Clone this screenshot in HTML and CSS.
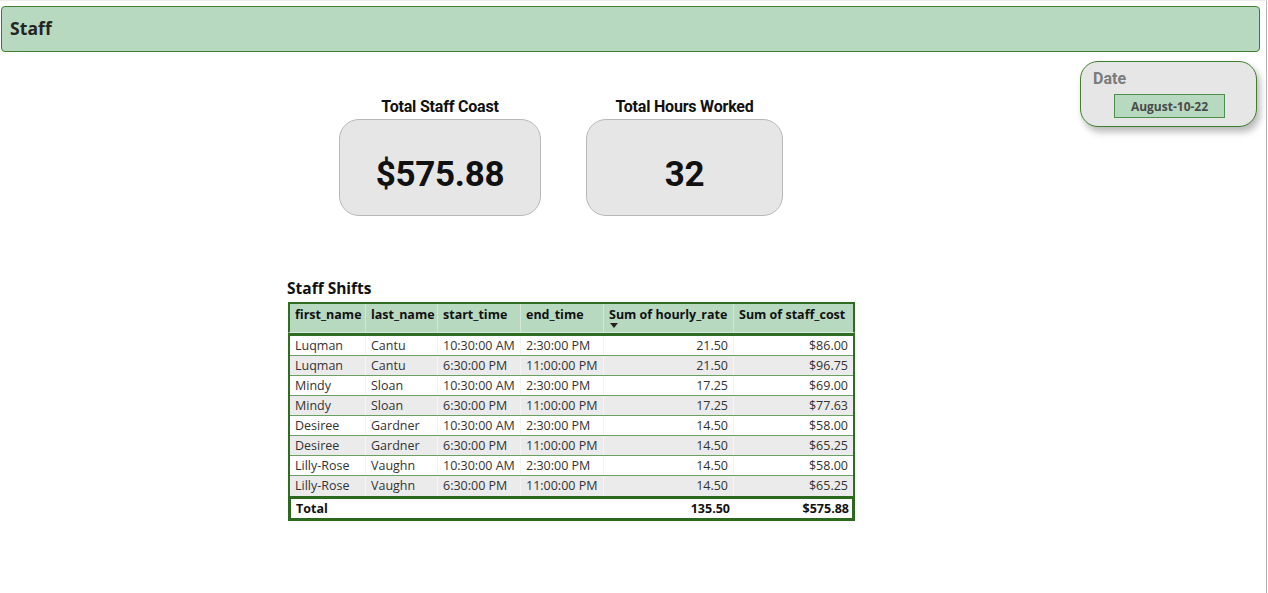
FILE: index.html
```html
<!DOCTYPE html>
<html>
<head>
<meta charset="utf-8">
<link rel="stylesheet" href="styles.css">
</head>
<body>
<div class="page">
  <div class="header"><span class="header-title">Staff</span></div>
  <div class="top-row">
    <div class="kpis">
      <div class="kpi kpi-cost">
        <div class="kpi-title">Total Staff Coast</div>
        <div class="kpi-card"><span class="kpi-value">$575.88</span></div>
      </div>
      <div class="kpi kpi-hours">
        <div class="kpi-title">Total Hours Worked</div>
        <div class="kpi-card"><span class="kpi-value">32</span></div>
      </div>
    </div>
    <div class="slicer">
      <div class="slicer-title">Date</div>
      <div class="slicer-value">August-10-22</div>
    </div>
  </div>
  <div class="table-section">
    <div class="table-title">Staff Shifts</div>
    <div class="table">
      <div class="thead row">
        <div class="cell">first_name</div>
        <div class="cell">last_name</div>
        <div class="cell">start_time</div>
        <div class="cell">end_time</div>
        <div class="cell sorted">Sum of hourly_rate<span class="sort-arrow"></span></div>
        <div class="cell">Sum of staff_cost</div>
      </div>
      <div class="tbody">
        <div class="row">
          <div class="cell">Luqman</div><div class="cell">Cantu</div><div class="cell">10:30:00 AM</div><div class="cell">2:30:00 PM</div><div class="cell num">21.50</div><div class="cell num">$86.00</div>
        </div>
        <div class="row alt">
          <div class="cell">Luqman</div><div class="cell">Cantu</div><div class="cell">6:30:00 PM</div><div class="cell">11:00:00 PM</div><div class="cell num">21.50</div><div class="cell num">$96.75</div>
        </div>
        <div class="row">
          <div class="cell">Mindy</div><div class="cell">Sloan</div><div class="cell">10:30:00 AM</div><div class="cell">2:30:00 PM</div><div class="cell num">17.25</div><div class="cell num">$69.00</div>
        </div>
        <div class="row alt">
          <div class="cell">Mindy</div><div class="cell">Sloan</div><div class="cell">6:30:00 PM</div><div class="cell">11:00:00 PM</div><div class="cell num">17.25</div><div class="cell num">$77.63</div>
        </div>
        <div class="row">
          <div class="cell">Desiree</div><div class="cell">Gardner</div><div class="cell">10:30:00 AM</div><div class="cell">2:30:00 PM</div><div class="cell num">14.50</div><div class="cell num">$58.00</div>
        </div>
        <div class="row alt">
          <div class="cell">Desiree</div><div class="cell">Gardner</div><div class="cell">6:30:00 PM</div><div class="cell">11:00:00 PM</div><div class="cell num">14.50</div><div class="cell num">$65.25</div>
        </div>
        <div class="row">
          <div class="cell">Lilly-Rose</div><div class="cell">Vaughn</div><div class="cell">10:30:00 AM</div><div class="cell">2:30:00 PM</div><div class="cell num">14.50</div><div class="cell num">$58.00</div>
        </div>
        <div class="row alt last">
          <div class="cell">Lilly-Rose</div><div class="cell">Vaughn</div><div class="cell">6:30:00 PM</div><div class="cell">11:00:00 PM</div><div class="cell num">14.50</div><div class="cell num">$65.25</div>
        </div>
      </div>
      <div class="tfoot row">
        <div class="cell total-label">Total</div>
        <div class="cell"></div><div class="cell"></div><div class="cell"></div>
        <div class="cell num">135.50</div>
        <div class="cell num">$575.88</div>
      </div>
    </div>
  </div>
</div>
</body>
</html>
```
FILE: styles.css
```css
* { box-sizing: border-box; }
html, body { margin: 0; padding: 0; background: #fff; }
body { font-family: "Open Sans", "Noto Sans", sans-serif; color: #252423; }

.page {
  width: 1267px;
  height: 593px;
  border-right: 1px solid #b3b3b3;
  border-top: 1px solid #ececec;
  display: flex;
  flex-direction: column;
  overflow: hidden;
}

.header {
  margin: 5px 6px 0 1px;
  height: 46px;
  background: #b7d9bf;
  border: 1px solid #3d7f2c;
  border-radius: 4px;
  display: flex;
  align-items: center;
  padding: 0 0 3px 8px;
}
.header-title {
  font-weight: 700;
  font-size: 17.5px;
  color: #252423;
  letter-spacing: 0.1px;
}

.top-row {
  display: flex;
  align-items: flex-start;
}

.kpis {
  display: flex;
  margin-left: 339px;
  margin-top: 45px;
  gap: 45px;
}
.kpi { display: flex; flex-direction: column; align-items: center; }
.kpi-title {
  font-family: "Roboto", sans-serif;
  font-weight: 700;
  font-size: 16px;
  line-height: 20px;
  color: #111;
  height: 22px;
  letter-spacing: -0.2px;
}
.kpi-card {
  height: 97px;
  background: #e6e6e6;
  border: 1px solid #b8b8b8;
  border-radius: 20px;
  display: flex;
  align-items: center;
  justify-content: center;
}
.kpi-cost .kpi-card { width: 202px; }
.kpi-hours .kpi-card { width: 197px; }
.kpi-value {
  font-family: "Roboto", sans-serif;
  font-weight: 700;
  font-size: 35px;
  color: #111;
  letter-spacing: -0.3px;
  margin-top: 14px;
}

.slicer {
  margin-left: auto;
  margin-right: 9px;
  margin-top: 9px;
  width: 177px;
  height: 66px;
  background: #e6e6e6;
  border: 1px solid #3d7f2c;
  border-radius: 18px;
  box-shadow: 3px 5px 7px rgba(0,0,0,0.28);
  padding: 8px 0 0 12px;
}
.slicer-title {
  font-family: "Roboto", sans-serif;
  font-weight: 700;
  font-size: 16px;
  line-height: 18px;
  color: #7b7b7b;
}
.slicer-value {
  margin: 6px 0 0 21px;
  width: 111px;
  height: 24px;
  background: #b7d9bf;
  border: 1px solid #4d8f4a;
  font-family: "Open Sans", sans-serif;
  font-weight: 700;
  font-size: 12px;
  color: #4a4a4a;
  display: flex;
  align-items: center;
  justify-content: center;
}

.table-section {
  margin-left: 287px;
  margin-top: 62px;
  width: 568px;
}
.table-title {
  font-weight: 700;
  font-size: 15.5px;
  line-height: 20px;
  color: #111;
  margin-bottom: 4px;
}
.table {
  margin-left: 1px;
  width: 567px;
  font-size: 12.5px;
}
.row {
  display: grid;
  grid-template-columns: 76px 72px 83px 83px 130px 119px;
}
.cell {
  padding: 0 5px 0 5px;
  white-space: nowrap;
  overflow: hidden;
}
.num { text-align: right; }

.thead {
  background: #b7d9bf;
  border: 2px solid #2f6e22;
  border-bottom: 1px solid #d9e9db;
  height: 31px;
  font-weight: 700;
  color: #111;
}
.thead .cell {
  line-height: 22px;
  border-right: 1px solid #d2e7d5;
  position: relative;
}
.thead .cell:last-child { border-right: none; }
.sort-arrow {
  position: absolute;
  left: 6px;
  top: 19px;
  width: 0;
  height: 0;
  border-left: 4px solid transparent;
  border-right: 4px solid transparent;
  border-top: 5px solid #222;
}

.tbody {
  border: 2px solid #2f6e22;
  border-bottom: none;
  border-top-width: 3px;
}
.tbody .row {
  height: 20px;
  background: #fff;
  border-bottom: 1px solid #6c9f63;
  color: #333;
}
.tbody .row.alt { background: #ebebeb; }
.tbody .row.last { border-bottom: none; }
.tbody .cell {
  line-height: 19px;
  border-right: 1px solid #f4f4f4;
}
.tbody .cell:last-child { border-right: none; }

.tfoot {
  border: 3px solid #2b6a1e;
  height: 25px;
  font-weight: 700;
  color: #111;
  background: #fff;
}
.tfoot .cell { line-height: 19px; }
```
